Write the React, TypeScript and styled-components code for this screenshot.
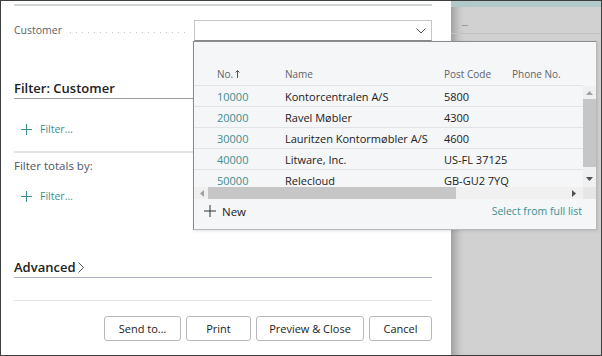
import React from 'react';
import styled, { createGlobalStyle } from 'styled-components';

const GlobalStyle = createGlobalStyle`
  html, body {
    margin: 0;
    padding: 0;
    background: #ffffff;
  }
  * {
    box-sizing: border-box;
  }
`;

const customers = [
  { no: '10000', name: 'Kontorcentralen A/S', post: '5800' },
  { no: '20000', name: 'Ravel Møbler', post: '4300' },
  { no: '30000', name: 'Lauritzen Kontormøbler A/S', post: '4600' },
  { no: '40000', name: 'Litware, Inc.', post: 'US-FL 37125' },
  { no: '50000', name: 'Relecloud', post: 'GB-GU2 7YQ' },
];

const Chevron: React.FC = () => (
  <svg width="10" height="6" viewBox="0 0 10 6">
    <path d="M0.5 0.5 L5 5 L9.5 0.5" fill="none" stroke="#555" strokeWidth="1" />
  </svg>
);

const Plus: React.FC<{ color?: string; size?: number }> = ({ color = '#3d8f90', size = 11 }) => (
  <svg width={size} height={size} viewBox={`0 0 ${size} ${size}`}>
    <path d={`M${size / 2} 0 V${size} M0 ${size / 2} H${size}`} stroke={color} strokeWidth="1" />
  </svg>
);

const Arrow: React.FC<{ dir: 'up' | 'down' | 'left' | 'right' }> = ({ dir }) => {
  const d = {
    up: 'M0 4 L3.5 0 L7 4 Z',
    down: 'M0 0 L7 0 L3.5 4 Z',
    left: 'M4 0 L4 7 L0 3.5 Z',
    right: 'M0 0 L4 3.5 L0 7 Z',
  }[dir];
  const vertical = dir === 'up' || dir === 'down';
  return (
    <svg width={vertical ? 7 : 4} height={vertical ? 4 : 7} viewBox={vertical ? '0 0 7 4' : '0 0 4 7'}>
      <path d={d} fill={dir === 'right' || dir === 'down' ? '#505050' : '#a0a0a0'} />
    </svg>
  );
};

const App: React.FC = () => (
  <>
    <GlobalStyle />
    <Frame>
      <Dialog>
        <TopRule />
        <FieldRow>
          <FieldLabel>Customer</FieldLabel>
          <Leader />
          <Select>
            <Chevron />
          </Select>
        </FieldRow>

        <SectionTitle>Filter: Customer</SectionTitle>
        <FilterLink>
          <Plus />
          <span>Filter…</span>
        </FilterLink>
        <Separator $thick />
        <SubTitle>Filter totals by:</SubTitle>
        <FilterLink $top={11}>
          <Plus />
          <span>Filter…</span>
        </FilterLink>

        <SectionTitle $top={51} $line="#a9b1c0">
          Advanced
          <AdvChevron>
            <svg width="6" height="11" viewBox="0 0 6 11">
              <path d="M0.5 0.5 L5.5 5.5 L0.5 10.5" fill="none" stroke="#555" strokeWidth="1" />
            </svg>
          </AdvChevron>
        </SectionTitle>
        <Separator $top={22} />

        <ButtonBar>
          <Button $w={77}>Send to…</Button>
          <Button $w={65}>Print</Button>
          <Button $w={108}>Preview &amp; Close</Button>
          <Button $w={63}>Cancel</Button>
        </ButtonBar>
      </Dialog>

      <Backdrop>
        <Band />
        <BackdropBar>
          <Dash />
        </BackdropBar>
      </Backdrop>

      <Dropdown>
        <HeaderRow>
          <HeadCell>
            No.
            <SortArrow>
              <svg width="5" height="8" viewBox="0 0 5 8">
                <path d="M2.5 0.5 V8 M0.5 2.5 L2.5 0.5 L4.5 2.5" fill="none" stroke="#555" strokeWidth="1" />
              </svg>
            </SortArrow>
          </HeadCell>
          <HeadCell>Name</HeadCell>
          <HeadCell>Post Code</HeadCell>
          <HeadCell>Phone No.</HeadCell>
        </HeaderRow>
        <ListArea>
          <Rows>
            {customers.map((c) => (
              <Row key={c.no}>
                <NoCell>{c.no}</NoCell>
                <Cell>{c.name}</Cell>
                <Cell>{c.post}</Cell>
                <Cell />
              </Row>
            ))}
          </Rows>
          <VScroll>
            <Arrow dir="up" />
            <VThumb />
            <Arrow dir="down" />
          </VScroll>
        </ListArea>
        <HScrollRow>
          <HScroll>
            <Arrow dir="left" />
            <HThumb />
            <Arrow dir="right" />
          </HScroll>
          <Corner />
        </HScrollRow>
        <Footer>
          <NewAction>
            <Plus color="#333" size={12} />
            New
          </NewAction>
          <FullList>Select from full list</FullList>
        </Footer>
      </Dropdown>
    </Frame>
  </>
);

export default App;

const font = `"Open Sans", "Noto Sans", "Liberation Sans", sans-serif`;

const Frame = styled.div`
  position: relative;
  width: 602px;
  height: 356px;
  border: 1px solid #3f3f3f;
  display: flex;
  font-family: ${font};
  overflow: hidden;
`;

const Dialog = styled.div`
  width: 450px;
  background: #ffffff;
  padding: 0 19px 0 13px;
  display: flex;
  flex-direction: column;
`;

const TopRule = styled.div`
  margin-top: 3px;
  height: 2px;
  background: #d2d5d9;
`;

const FieldRow = styled.div`
  margin-top: 14px;
  height: 21px;
  display: flex;
  align-items: center;
`;

const FieldLabel = styled.div`
  font-size: 10.5px;
  color: #5b5f66;
  line-height: 21px;
`;

const Leader = styled.div`
  flex: 1;
  height: 1px;
  margin: 3px 8px 0 8px;
  background-image: linear-gradient(to right, #c4c4c4 1px, transparent 1px);
  background-size: 6px 1px;
  background-repeat: repeat-x;
`;

const Select = styled.div`
  width: 238px;
  height: 21px;
  border: 1px solid #c6c6c6;
  border-bottom-color: #8a8a8a;
  display: flex;
  align-items: center;
  justify-content: flex-end;
  padding-right: 5px;
`;

const SectionTitle = styled.div<{ $top?: number; $line?: string }>`
  margin-top: ${(p) => p.$top ?? 37}px;
  height: 21px;
  line-height: 20px;
  font-size: 13px;
  font-weight: 600;
  color: #212121;
  border-bottom: 1px solid ${(p) => p.$line ?? '#9d9d9d'};
  display: flex;
  align-items: center;
`;

const AdvChevron = styled.span`
  display: inline-flex;
  margin-left: 3px;
  margin-top: 1px;
`;

const FilterLink = styled.div<{ $top?: number }>`
  margin-top: ${(p) => p.$top ?? 20}px;
  margin-left: 7px;
  height: 20px;
  display: flex;
  align-items: center;
  gap: 8px;
  font-size: 10.5px;
  color: #3d8f90;
`;

const Separator = styled.div<{ $top?: number; $thick?: boolean }>`
  margin-top: ${(p) => p.$top ?? 12}px;
  height: ${(p) => (p.$thick ? 2 : 1)}px;
  background: #e3e3e3;
`;

const SubTitle = styled.div`
  margin-top: 4px;
  line-height: 18px;
  font-size: 11.5px;
  color: #4e5560;
`;

const ButtonBar = styled.div`
  margin-top: 15px;
  display: flex;
  justify-content: flex-end;
  gap: 5px;
`;

const Button = styled.div<{ $w: number }>`
  width: ${(p) => p.$w}px;
  height: 25px;
  border: 1px solid #b9b9b9;
  border-radius: 3px;
  background: #ffffff;
  display: flex;
  align-items: center;
  justify-content: center;
  font-size: 11px;
  color: #222;
`;

const Backdrop = styled.div`
  flex: 1;
  background: #d1d1d1;
  box-shadow: inset 10px 0 10px -6px rgba(0, 0, 0, 0.28);
  display: flex;
  flex-direction: column;
`;

const Band = styled.div`
  height: 6px;
  background: #b2c9c9;
`;

const BackdropBar = styled.div`
  height: 27px;
  border-bottom: 1px solid #c2c2c2;
  padding: 18px 0 0 11px;
`;

const Dash = styled.div`
  width: 6px;
  height: 1px;
  background: #8e9ea4;
`;

const Dropdown = styled.div`
  position: absolute;
  left: 192px;
  top: 40px;
  width: 404px;
  height: 189px;
  background: #f5f6f8;
  border: 1px solid #b8b8b8;
  border-left-color: #8c8c8c;
  border-top-color: #8c8c8c;
  box-shadow: 1px 1px 3px rgba(0, 0, 0, 0.12);
  display: flex;
  flex-direction: column;
`;

const cols = `grid-template-columns: 68px 159px 68px 1fr;`;

const HeaderRow = styled.div`
  margin-top: 21px;
  margin-right: 13px;
  height: 23px;
  padding-left: 23px;
  display: grid;
  ${cols}
  align-items: center;
  border-bottom: 1px solid #e1e3e6;
`;

const HeadCell = styled.div`
  font-size: 10px;
  color: #5f646b;
  white-space: nowrap;
  display: flex;
  align-items: center;
`;

const SortArrow = styled.span`
  display: inline-flex;
  margin-left: 2px;
  margin-top: -1px;
`;

const ListArea = styled.div`
  height: 101px;
  display: flex;
`;

const Rows = styled.div`
  flex: 1;
  overflow: hidden;
`;

const Row = styled.div`
  height: 21px;
  padding-left: 23px;
  display: grid;
  ${cols}
  align-items: center;
  border-bottom: 1px solid #e1e3e6;
  font-size: 11px;
  color: #222;
`;

const Cell = styled.div`
  white-space: nowrap;
`;

const NoCell = styled(Cell)`
  color: #3d8f90;
`;

const VScroll = styled.div`
  width: 13px;
  background: #f0f0f0;
  display: flex;
  flex-direction: column;
  align-items: center;
  padding: 5px 0 6px;
`;

const VThumb = styled.div`
  width: 13px;
  flex: 1;
  margin: 4px 0 10px;
  background: #c6c6c6;
`;

const HScrollRow = styled.div`
  height: 12px;
  display: flex;
`;

const HScroll = styled.div`
  flex: 1;
  background: #f0f0f0;
  display: flex;
  align-items: center;
  padding: 0 7px 0 6px;
`;

const HThumb = styled.div`
  width: 248px;
  height: 12px;
  margin-left: 4px;
  margin-right: auto;
  background: #c6c6c6;
`;

const Corner = styled.div`
  width: 13px;
  background: #e6e6e6;
`;

const Footer = styled.div`
  flex: 1;
  display: flex;
  align-items: center;
  justify-content: space-between;
  padding: 0 14px 6px 10px;
`;

const NewAction = styled.div`
  display: flex;
  align-items: center;
  gap: 6px;
  font-size: 11.5px;
  color: #222;
`;

const FullList = styled.div`
  font-size: 10.5px;
  color: #3d8f90;
`;
